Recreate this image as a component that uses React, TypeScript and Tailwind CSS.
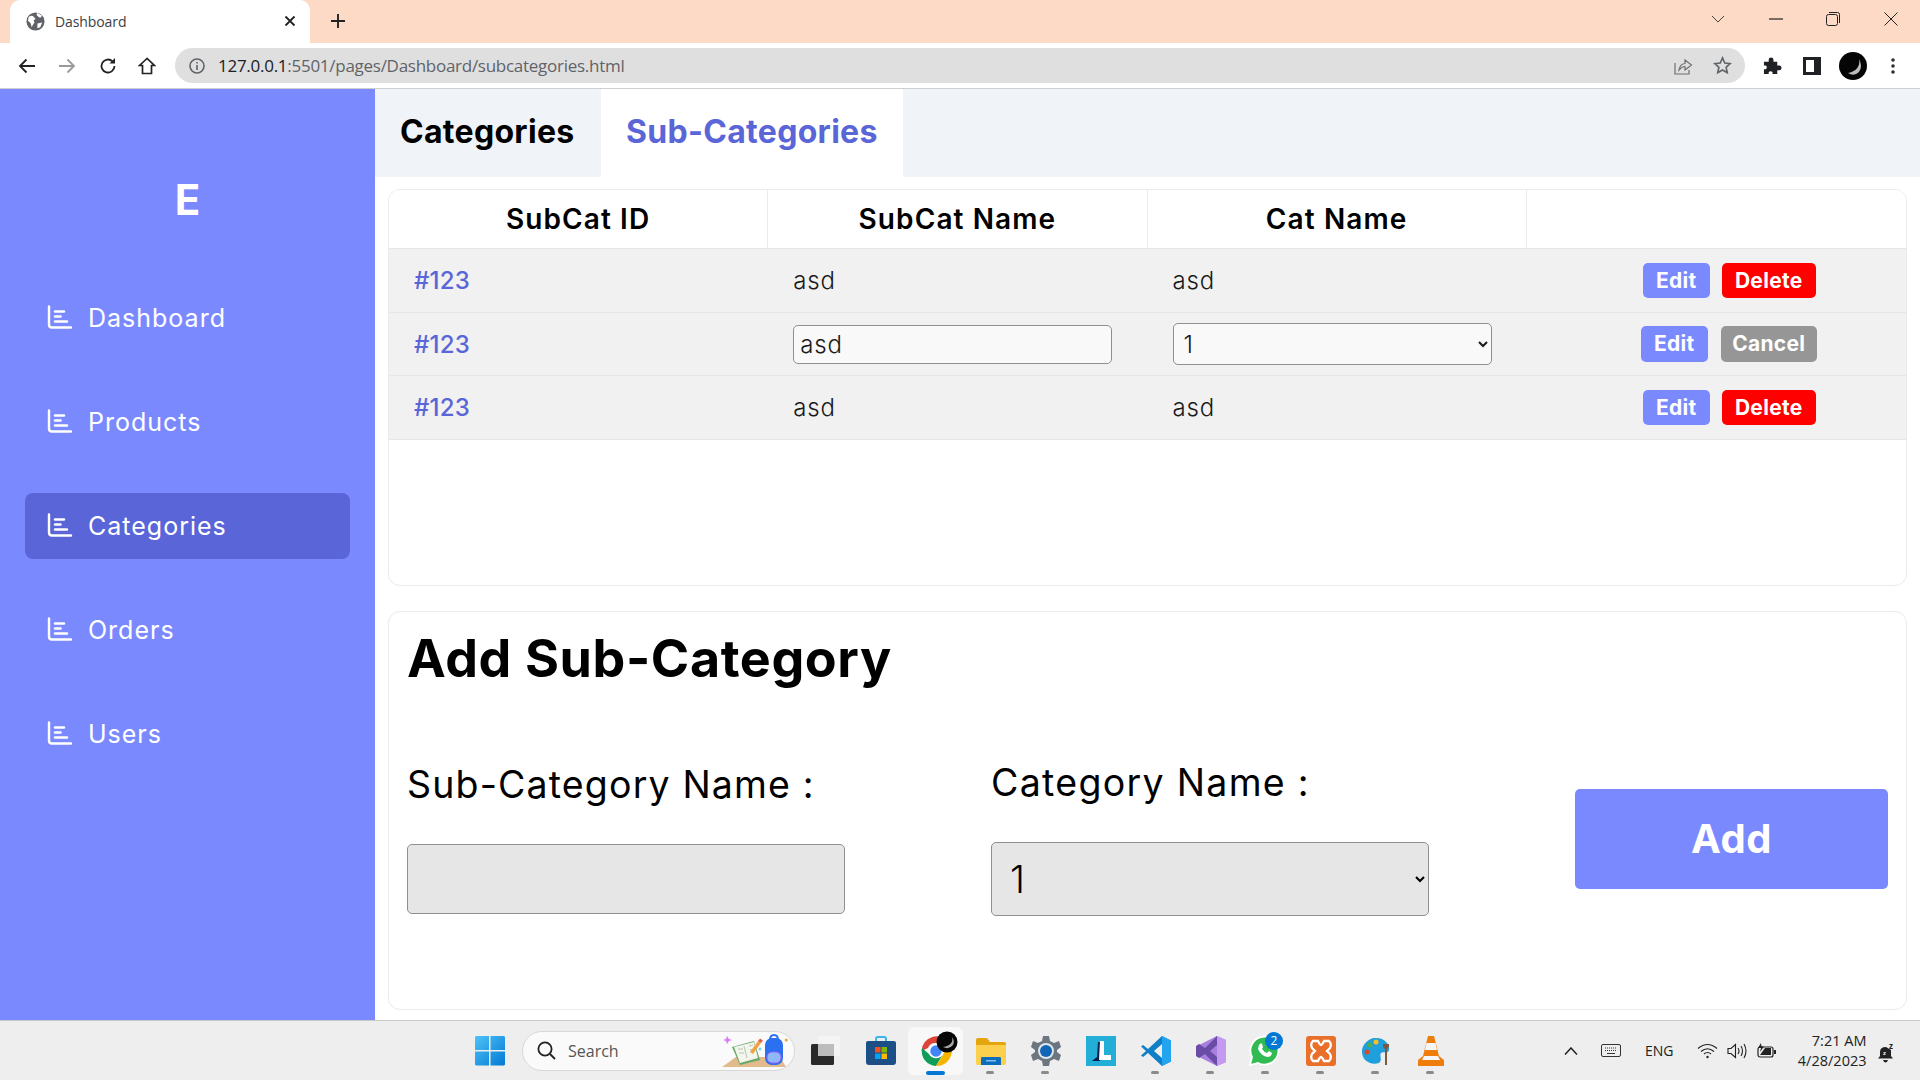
import React from "react";

const F = "font-['Inter','Liberation_Sans',sans-serif]";
const U = "font-['Open_Sans','Noto_Sans',sans-serif]";

function NavIcon() {
  return (
    <svg width="26" height="24" viewBox="0 0 26 24" fill="none" stroke="white" strokeWidth="2.4" strokeLinecap="round" className="relative -top-[1px]">
      <path d="M2 1.5V19.5Q2 22.5 5 22.5H24" />
      <path d="M8 6.5H17" />
      <path d="M8 11.5H13.5" />
      <path d="M8 16.5H20" />
    </svg>
  );
}

function Nav({ label, active }: { label: string; active?: boolean }) {
  return (
    <div className={`flex h-[66px] items-center gap-[15px] rounded-lg pl-[22px] ${active ? "bg-[#5a65d8]" : ""}`}>
      <NavIcon />
      <span className="pt-[2px] text-[25px] font-normal tracking-[1px] text-white">{label}</span>
    </div>
  );
}

function Btn({ label, cls }: { label: string; cls: string }) {
  return (
    <span className={`flex items-center justify-center rounded-[5px] text-[21px] font-bold tracking-[0.3px] text-white ${cls}`}>{label}</span>
  );
}

function Row({ h, editing }: { h: string; editing?: boolean }) {
  return (
    <div className={`grid grid-cols-4 border-b border-[#e6e6e6] bg-[#f1f1f1] ${h}`}>
      <div className={`flex items-center pl-[25px] text-[24px] font-medium tracking-[0.2px] text-[#5a65d8] ${editing ? "pt-[1px]" : ""}`}>#123</div>
      <div className="flex items-center pl-[25px] text-[24px] font-light tracking-[0.8px] text-[#1a1a1a]">
        {editing ? (
          <input readOnly value="asd" className="h-[39px] w-[319px] rounded-[5px] border border-[#8f8f8f] bg-[#f9f9f9] px-[6px] text-[24px] font-light tracking-[0.8px] text-[#1a1a1a]" />
        ) : "asd"}
      </div>
      <div className="flex items-center pl-[25px] text-[24px] font-light tracking-[0.8px] text-[#1a1a1a]">
        {editing ? (
          <select className="h-[42px] w-[319px] rounded-[5px] border border-[#8f8f8f] bg-[#f9f9f9] pl-[6px] text-[24px] font-light text-[#1a1a1a]"><option>1</option></select>
        ) : "asd"}
      </div>
      <div className="flex items-center">
        {editing ? (
          <div className="ml-[114px] flex gap-[13px]">
            <Btn label="Edit" cls="h-[36px] w-[67px] bg-[#7b89ff]" />
            <Btn label="Cancel" cls="h-[36px] w-[96px] bg-[#969696]" />
          </div>
        ) : (
          <div className="ml-[116px] flex gap-[12px]">
            <Btn label="Edit" cls="h-[35px] w-[67px] bg-[#7b89ff]" />
            <Btn label="Delete" cls="h-[35px] w-[94px] bg-[#ff0000]" />
          </div>
        )}
      </div>
    </div>
  );
}

function Th({ label, last }: { label: string; last?: boolean }) {
  return (
    <div className={`flex items-center justify-center text-[28px] font-semibold tracking-[1.1px] text-black ${last ? "" : "border-r border-[#ebebeb]"}`}>{label}</div>
  );
}

function TabBar() {
  return (
    <div className="relative flex h-[43px] shrink-0 items-end bg-[#fcdac6]">
      <div className="relative ml-[10px] flex h-[43px] w-[300px] items-center rounded-t-[10px] bg-white pl-[16px]">
        <svg width="19" height="19" viewBox="0 0 20 20" className="mr-[10px]">
          <circle cx="10" cy="10" r="9.5" fill="#5f6368" />
          <path d="M3 5 Q7 3 8 5 L10 7 L8 9 L9 11 L7 14 L6 16 L5 12 L2 9Z M12 1 L17 4 L15 6 L13 5 L11 3Z M12 12 L17 11 L15 16 L12 17Z" fill="white" />
        </svg>
        <span className={`${U} text-[14px] tracking-[-0.1px] text-[#3c4043]`}>Dashboard</span>
        <svg width="12" height="12" viewBox="0 0 12 12" className="absolute left-[274px] top-[15px]" stroke="#222" strokeWidth="1.8"><path d="M1.5 1.5L10.5 10.5M10.5 1.5L1.5 10.5" /></svg>
      </div>
      <svg width="16" height="16" viewBox="0 0 16 16" className="ml-[20px] mb-[14px]" stroke="#222" strokeWidth="1.9"><path d="M8 1V15M1 8H15" /></svg>
      <div className="ml-auto mb-[17px] flex items-center">
        <svg width="14" height="8" viewBox="0 0 14 8" className="mr-[1px]" fill="none" stroke="#444" strokeWidth="1"><path d="M1 1L7 7L13 1" /></svg>
        <svg width="14" height="2" viewBox="0 0 14 2" className="ml-[43px]" stroke="#222" strokeWidth="1.2"><path d="M0 1H14" /></svg>
        <svg width="14" height="14" viewBox="0 0 14 14" className="ml-[43px]" fill="none" stroke="#222" strokeWidth="1"><rect x="0.5" y="2.5" width="11" height="11" rx="2" /><path d="M3 .5H11.5Q13.5 .5 13.5 2.5V11" /></svg>
        <svg width="14" height="14" viewBox="0 0 14 14" className="ml-[44px] mr-[22px]" stroke="#222" strokeWidth="1"><path d="M.5 .5L13.5 13.5M13.5 .5L.5 13.5" /></svg>
      </div>
    </div>
  );
}

function Toolbar() {
  return (
    <div className="flex h-[46px] shrink-0 items-center border-b border-[#cfcfcf] bg-white">
      <svg width="18" height="16" viewBox="0 0 18 16" className="ml-[18px]" fill="none" stroke="#222" strokeWidth="1.8"><path d="M17 8H2M8.5 1.5L2 8L8.5 14.5" /></svg>
      <svg width="18" height="16" viewBox="0 0 18 16" className="ml-[22px]" fill="none" stroke="#9a9a9a" strokeWidth="1.8"><path d="M1 8H16M9.5 1.5L16 8L9.5 14.5" /></svg>
      <svg width="18" height="18" viewBox="0 0 18 18" className="ml-[23px]" fill="none" stroke="#222" strokeWidth="1.8"><path d="M15.5 9A6.5 6.5 0 1 1 13.5 4.3" /><path d="M16 1V6.5H10.5Z" fill="#222" stroke="none" /></svg>
      <svg width="18" height="18" viewBox="0 0 18 18" className="ml-[21px]" fill="none" stroke="#222" strokeWidth="1.7"><path d="M9 1.5L1.5 8.5H4.5V16.5H13.5V8.5H16.5Z" /></svg>
      <div className="ml-[19px] flex h-[35px] w-[1570px] items-center rounded-full bg-[#dfdfdf] pl-[14px]">
        <svg width="16" height="16" viewBox="0 0 16 16" fill="none" stroke="#5f6368" strokeWidth="1.6"><circle cx="8" cy="8" r="7" /><path d="M8 7V12M8 4V5.6" /></svg>
        <span className={`${U} ml-[13px] text-[17px] tracking-[-0.27px] text-[#202124]`}>127.0.0.1<span className="text-[#5f6368]">:5501/pages/Dashboard/subcategories.html</span></span>
        <svg width="20" height="20" viewBox="0 0 20 20" className="ml-auto" fill="none" stroke="#6f6f6f" strokeWidth="1.2"><path d="M2 7V18H16V14M6 14Q7 8 12 7.5V4L18.5 9L12 14V10.5Q9 10.5 6 14Z" /></svg>
        <svg width="19" height="19" viewBox="0 0 20 20" className="ml-[20px] mr-[13px]" fill="none" stroke="#5f6368" strokeWidth="1.7"><path d="M10 2L12.4 7.4L18 8L13.8 11.9L15 17.6L10 14.7L5 17.6L6.2 11.9L2 8L7.6 7.4Z" /></svg>
      </div>
      <svg width="19" height="19" viewBox="0 0 20 20" className="ml-[18px]" fill="#202124"><path d="M1 6H6V4A2.5 2.5 0 0 1 11 4V6H15V10H17A2.5 2.5 0 0 1 17 15H15V19H10V17A2.5 2.5 0 0 0 6 17V19H1V14H3A2.5 2.5 0 0 0 3 10H1Z" /></svg>
      <svg width="18" height="18" viewBox="0 0 18 18" className="ml-[21px]" fill="#202124"><path d="M0 0H18V18H0ZM3 3V15H11V3Z" fillRule="evenodd" /></svg>
      <svg width="28" height="28" viewBox="0 0 28 28" className="ml-[18px]"><circle cx="14" cy="14" r="14" fill="#050505" /><path d="M20 7Q22 18 9 21Q15 25 20 20Q24 14 20 7Z" fill="#bbb" /></svg>
      <svg width="4" height="16" viewBox="0 0 4 16" className="ml-[24px]" fill="#303030"><circle cx="2" cy="2" r="1.8" /><circle cx="2" cy="8" r="1.8" /><circle cx="2" cy="14" r="1.8" /></svg>
    </div>
  );
}

function Slot({ children, dot, active }: { children: React.ReactNode; dot?: boolean; active?: boolean }) {
  return (
    <div className={`relative flex h-[48px] w-[55px] shrink-0 items-center justify-center ${active ? "rounded-md bg-[#f8f8f8]" : ""}`}>
      {children}
      {dot && <span className="absolute bottom-[1px] left-[23px] h-[3px] w-[8px] rounded-full bg-[#8a8a8a]" />}
      {active && <span className="absolute bottom-[0px] left-[18px] h-[4px] w-[19px] rounded-full bg-[#0078d4]" />}
    </div>
  );
}

function Taskbar() {
  return (
    <div className="flex h-[60px] shrink-0 items-center border-t border-[#c8c8c8] bg-[#eeeeee] pl-[475px]">
      <svg width="30" height="30" viewBox="0 0 30 30" className="shrink-0">
        <defs><linearGradient id="w" x1="0" y1="0" x2="1" y2="1"><stop offset="0" stopColor="#4fc3f7" /><stop offset="1" stopColor="#0278d4" /></linearGradient></defs>
        <path d="M1 0H14V14H0V1ZM15.500 0H29L30 1V14H15.500ZM0 15.500H14V29.500H1L0 28.500ZM15.500 15.500H30V28.500L29 29.500H15.500Z" fill="url(#w)" />
      </svg>
      <div className="ml-[17px] flex h-[40px] w-[273px] shrink-0 items-center rounded-full border border-[#d8d8d8] bg-[#fafafa] pl-[14px]">
        <svg width="19" height="19" viewBox="0 0 19 19" fill="none" stroke="#222" strokeWidth="1.8"><circle cx="8" cy="8" r="6.6" /><path d="M13 13L18 18" /></svg>
        <span className={`${U} ml-[12px] text-[16px] text-[#555]`}>Search</span>
        <svg width="66" height="36" viewBox="0 0 66 36" className="ml-auto mr-[6px]">
          <path d="M0 34L14 24H58L64 34Z" fill="#e2bb8c" />
          <path d="M10 14L32 8L38 27L18 32Z" fill="#6aa76a" /><path d="M12 14L32 9L36 25L18 30Z" fill="#f3f6ee" />
          <path d="M22 13L25 25M16 16H21M17 20H22M27 13L31 12M28 17L32 16" stroke="#b9c4b0" strokeWidth="1" fill="none" />
          <path d="M28 19L36 8L39 10L31 21Z" fill="#f2a341" /><path d="M36 8L38 5.500L41 7.500L39 10Z" fill="#e8604c" />
          <path d="M5 3L7 6L10 7L7 8L5 11L4 8L1 7L4 6Z" fill="#d87cf2" />
          <path d="M48 7Q48 2 52 2Q56 2 56 7" fill="none" stroke="#2a70f0" strokeWidth="2" />
          <rect x="43" y="5" width="18" height="27" rx="7" fill="#2a70f0" /><rect x="45" y="19" width="14" height="11" rx="5" fill="#8fb8fa" stroke="#a05cf0" strokeWidth="1" />
          <circle cx="38" cy="16" r="1.500" fill="#6fd8ee" /><circle cx="64.300" cy="7" r="1.600" fill="#f5a623" />
        </svg>
      </div>
      <div className="flex">
        <div className="ml-[3px]" />
        <Slot>
          <svg width="30" height="30" viewBox="0 0 30 30"><rect x="7" y="0" width="22" height="20" rx="1.500" fill="#f4f4f4" /><rect x="0" y="8" width="23" height="21" rx="1.500" fill="#2a2a2a" /><rect x="7" y="8" width="16" height="12" fill="#bdbdbd" /></svg>
        </Slot>
        <Slot>
          <svg width="30" height="30" viewBox="0 0 30 30"><path d="M10 6V3Q10 1 12 1H18Q20 1 20 3V6" fill="none" stroke="#3cb4ea" strokeWidth="2" /><path d="M2 5H28Q30 5 30 7V26Q30 29 27 29H3Q0 29 0 26V7Q0 5 2 5Z" fill="#1c4f86" /><rect x="9" y="11" width="5.500" height="5.500" fill="#f25022" /><rect x="15.500" y="11" width="5.500" height="5.500" fill="#7fba00" /><rect x="9" y="17.500" width="5.500" height="5.500" fill="#00a4ef" /><rect x="15.500" y="17.500" width="5.500" height="5.500" fill="#ffb900" /></svg>
        </Slot>
        <Slot active>
          <svg width="44" height="40" viewBox="0 0 44 40">
            <path d="M7.500 20A15 15 0 0 1 35 12H22A8 8 0 0 0 14 17Z" fill="#db4437" />
            <path d="M8 17A15 15 0 0 0 22 35L29 23A8 8 0 0 1 15 23Z" fill="#0f9d58" />
            <path d="M36 13A15 15 0 0 1 22 35L29 24A8 8 0 0 0 28 14Z" fill="#f4b400" />
            <circle cx="22" cy="20" r="6.500" fill="#4285f4" stroke="white" strokeWidth="1.500" />
            <circle cx="33" cy="11" r="10.500" fill="#060606" /><path d="M38 6Q40 14 29 16Q35 19 39 14Q41 10 38 6Z" fill="#aaa" />
          </svg>
        </Slot>
        <Slot dot>
          <svg width="30" height="28" viewBox="0 0 30 28"><path d="M0 3Q0 1 2 1H11L14 5H28Q30 5 30 7V10H0Z" fill="#e5a50f" /><path d="M0 8H30V26Q30 28 28 28H2Q0 28 0 26Z" fill="#fccf4d" /><path d="M5 21Q5 20 7 20H23Q25 20 25 21V28H5Z" fill="#0f6cbd" /><rect x="10" y="23" width="10" height="1.500" fill="#7fc1f0" /></svg>
        </Slot>
        <Slot dot>
          <svg width="30" height="30" viewBox="0 0 30 30"><path d="M12 0H18L19 5L23 7L28 5L30 11L26 14V16L30 19L28 25L23 23L19 25L18 30H12L11 25L7 23L2 25L0 19L4 16V14L0 11L2 5L7 7L11 5Z" fill="#6b7680" /><circle cx="15" cy="15" r="8" fill="#dfe6ec" /><circle cx="15" cy="15" r="6" fill="#1265b5" /></svg>
        </Slot>
        <Slot>
          <svg width="30" height="30" viewBox="0 0 30 30"><rect width="30" height="30" fill="#23aed8" /><path d="M12 6H15L14 25H6L11 21Z" fill="#0c1f52" /><path d="M14 5H18V19H25V24H13Z" fill="white" /></svg>
        </Slot>
        <Slot dot>
          <svg width="30" height="30" viewBox="0 0 30 30"><path d="M21 0L30 4.500V25.500L21 30L7 17L2 21L0 19.500L5 15L0 10.500L2 9L7 13ZM21 8L13 15L21 22Z" fill="#0f7fc7" fillRule="evenodd" /><path d="M21 0L30 4.500V25.500L21 30V22L21 8Z" fill="#22a5ee" /></svg>
        </Slot>
        <Slot dot>
          <svg width="30" height="30" viewBox="0 0 30 30"><path d="M21 0L30 4V26L21 30L3 21L0 19V11L3 9Z" fill="#a97fe0" /><path d="M21 0V30L9 18L3 22L0 20V10L3 8L9 12ZM21 9L14 15L21 21Z" fill="#6a4ba6" fillRule="evenodd" /><path d="M21 0L30 4V26L21 30Z" fill="#c49af0" /></svg>
        </Slot>
        <Slot dot>
          <svg width="36" height="36" viewBox="0 0 36 36" className="relative -top-[1px]">
            <path d="M2 34L4 26A14 14 0 1 1 10 32Z" fill="#32bb52" stroke="#fff" strokeWidth="1.800" transform="translate(0 -1)" />
            <path d="M11 13Q13 10 14 12L15 15L14 17Q16 20 19 21L21 19L24 21Q24 24 20 25Q13 24 10 17Z" fill="white" />
            <circle cx="26" cy="9" r="9" fill="#0078d4" />
            <text x="26" y="13" textAnchor="middle" fontSize="12" fill="white" fontFamily="Open Sans">2</text>
          </svg>
        </Slot>
        <Slot dot>
          <svg width="30" height="30" viewBox="0 0 30 30"><rect width="30" height="30" rx="3" fill="#e8702a" /><path d="M7 5H12Q14 9 15 9Q16 9 18 5H23Q26 8 24 12L21 15L24 18Q26 22 23 25H18Q16 21 15 21Q14 21 12 25H7Q4 22 6 18L9 15L6 12Q4 8 7 5Z" fill="none" stroke="white" strokeWidth="2.300" /></svg>
        </Slot>
        <Slot dot>
          <svg width="30" height="30" viewBox="0 0 30 30"><path d="M13 2C23 1 29 8 28 14C27 18 22 15 20 17C18 20 22 24 18 27C8 30 0 23 1 14C2 8 7 3 13 2Z" fill="#1f9fdc" /><circle cx="9" cy="9" r="2.500" fill="#4cae4f" /><circle cx="15" cy="6" r="2.500" fill="#f6c026" /><circle cx="6" cy="16" r="2.500" fill="#d74a2a" /><path d="M22 8H28V11L26 13V29H24V13L22 11Z" fill="#7c5a3a" /></svg>
        </Slot>
        <Slot dot>
          <svg width="30" height="30" viewBox="0 0 30 30"><path d="M12 0H18L23 20L28 24V30H2V24L7 20Z" fill="#ee7d0c" /><path d="M10.500 7H19.500L21 14H9Z" fill="#f6f6f6" /><path d="M8 20H22L24 24H6Z" fill="#f6f6f6" /></svg>
        </Slot>
      </div>
      <svg width="14" height="8" viewBox="0 0 14 8" className="ml-[106px] shrink-0" fill="none" stroke="#222" strokeWidth="1.500"><path d="M1 7.500L7 1L13 7.500" /></svg>
      <svg width="20" height="13" viewBox="0 0 20 13" className="ml-[23px] shrink-0" fill="none" stroke="#333" strokeWidth="1"><rect x=".5" y=".5" width="19" height="12" rx="1.500" /><path d="M4 4H16M4 6.500H16" strokeDasharray="1 1" /><path d="M6 9.500H14" /></svg>
      <span className={`${U} ml-[24px] shrink-0 text-[14px] text-[#222]`}>ENG</span>
      <svg width="21" height="16" viewBox="0 0 21 16" className="ml-[23px] shrink-0" fill="none" stroke="#222" strokeWidth="1.200"><path d="M1 5.500Q10.500 -2.500 20 5.500M4 8.500Q10.500 3 17 8.500M7 11Q10.500 8 14 11" /><circle cx="10.500" cy="14" r="1.200" fill="#222" stroke="none" /></svg>
      <svg width="20" height="16" viewBox="0 0 20 16" className="ml-[9px] shrink-0" fill="none" stroke="#222" strokeWidth="1.100"><path d="M1 5.500H4L8.500 1.500V14.500L4 10.500H1Z" /><path d="M11 5Q13 8 11 11M14 3Q17 8 14 13M17 1Q21 8 17 15" /></svg>
      <svg width="20" height="16" viewBox="0 0 20 16" className="ml-[10px] shrink-0"><rect x="1" y="4" width="15" height="10" rx="2" fill="none" stroke="#222" strokeWidth="1.200" /><path d="M3 12L8 5H14V12Z" fill="#222" /><rect x="17" y="7" width="2" height="4" fill="#222" /><path d="M4 0L1 5H4L3 9L7 3.500H4.500Z" fill="#222" /></svg>
      <div className={`${U} ml-[4px] flex w-[86px] shrink-0 flex-col items-end text-[14.5px] leading-[20px] text-[#222]`}>
        <span>7:21 AM</span>
        <span>4/28/2023</span>
      </div>
      <svg width="18" height="24" viewBox="0 -4 18 24" className="ml-[11px] shrink-0"><path d="M8 4Q2 4 2 9V13L0 15.500H15L13 13V7Z" fill="#222" /><path d="M5 17H10Q9 19.500 7.500 19.500Q6 19.500 5 17Z" fill="#222" /><text x="5" y="12" fontSize="6" fill="#eee" fontWeight="700" fontFamily="Open Sans">z</text><text x="11" y="6" fontSize="8" fill="#222" fontWeight="700" fontFamily="Open Sans">z</text></svg>
    </div>
  );
}

export default function App() {
  return (
    <div className={`${F} flex h-[1080px] w-[1920px] flex-col overflow-hidden bg-white text-black`}>
      <TabBar />
      <Toolbar />
      <div className="flex min-h-0 flex-1">
        <aside className="flex w-[375px] shrink-0 flex-col bg-[#7b89ff] px-[25px] pt-[87px]">
          <div className="mb-[61px] flex h-[48px] items-center justify-center text-[42px] font-bold leading-none text-white">E</div>
          <nav className="flex flex-col gap-[38px]">
            <Nav label="Dashboard" />
            <Nav label="Products" />
            <Nav label="Categories" active />
            <Nav label="Orders" />
            <Nav label="Users" />
          </nav>
        </aside>
        <main className="flex min-w-0 flex-1 flex-col">
          <div className="flex h-[88px] shrink-0 bg-[#f0f4f9] text-[32px] font-bold tracking-[0.3px]">
            <div className="flex w-[226px] items-center pb-[2px] pl-[25px]">Categories</div>
            <div className="flex w-[302px] items-center bg-white pb-[2px] pl-[25px] text-[#5a65d8]">Sub-Categories</div>
          </div>
          <div className="flex flex-1 flex-col gap-[25px] pl-[13px] pr-[13px] pt-[12px]">
            <section className="h-[397px] overflow-hidden rounded-xl border border-[#ebebeb]">
              <div className="grid h-[59px] grid-cols-4 border-b border-[#e6e6e6] bg-white">
                <Th label="SubCat ID" />
                <Th label="SubCat Name" />
                <Th label="Cat Name" />
                <Th label="" last />
              </div>
              <Row h="h-[64px]" />
              <Row h="h-[63px]" editing />
              <Row h="h-[64px]" />
            </section>
            <section className="h-[399px] rounded-xl border border-[#ebebeb] pl-[18px] pr-[18px] pt-[17px]">
              <h1 className="text-[52px] font-bold leading-[60px] tracking-[0.6px]">Add Sub-Category</h1>
              <div className="mt-[66px] flex">
                <div className="flex w-[584px] flex-col">
                  <label className="pt-[1px] h-[58px] text-[37.5px] font-normal leading-[58px] tracking-[1.15px]">Sub-Category Name :</label>
                  <input className="mt-[31px] h-[70px] w-[438px] rounded-[5px] border border-[#8f8f8f] bg-[#e6e6e6]" />
                </div>
                <div className="flex w-[584px] flex-col">
                  <label className="-mt-[2px] pt-[1px] h-[58px] text-[37.5px] font-normal leading-[58px] tracking-[1.3px]">Category Name :</label>
                  <select className="mt-[31px] h-[74px] w-[438px] rounded-[5px] border border-[#8f8f8f] bg-[#e6e6e6] pl-[14px] text-[38px] font-light"><option>1</option></select>
                </div>
                <button className="mt-[34px] h-[100px] w-[313px] rounded-[5px] bg-[#7b89ff] text-[40px] font-bold tracking-[0.6px] text-white">Add</button>
              </div>
            </section>
          </div>
        </main>
      </div>
      <Taskbar />
    </div>
  );
}
